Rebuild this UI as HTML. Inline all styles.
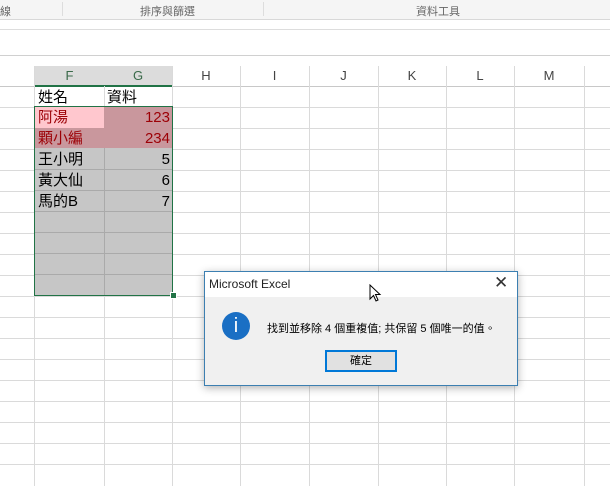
<!DOCTYPE html><html><head><style>
body{margin:0;width:610px;height:486px;background:#fff;position:relative;overflow:hidden;font-family:"Liberation Sans","Noto Sans CJK TC",sans-serif}
.a{position:absolute}
.vl{position:absolute;top:86px;bottom:0;width:1px;background:#dadada}
.hl{position:absolute;left:0;right:0;height:1px;background:#dadada}
.ch{position:absolute;top:66px;height:20px;font-size:13px;color:#444;text-align:center;line-height:20px}
.t{position:absolute;font-size:15px;color:#000;line-height:21px}
</style></head><body>
<div class="a" style="left:0;top:0;width:610px;height:19px;background:#f5f5f5;border-bottom:1px solid #d8d8d8"></div>
<div class="a" style="left:0;top:3px;font-size:11px;color:#666">線</div>
<div class="a" style="left:62px;top:2px;width:1px;height:14px;background:#ddd"></div>
<div class="a" style="left:140px;top:3px;font-size:11px;color:#666">排序與篩選</div>
<div class="a" style="left:263px;top:2px;width:1px;height:14px;background:#ddd"></div>
<div class="a" style="left:416px;top:3px;font-size:11px;color:#666">資料工具</div>
<div class="a" style="left:0;top:29px;width:610px;height:1px;background:#ddd"></div>
<div class="a" style="left:0;top:55px;width:610px;height:1px;background:#d0d0d0"></div>
<div class="a" style="left:0;top:66px;width:610px;height:20px;background:#fff;border-bottom:1px solid #c8c8c8"></div>
<div class="a" style="left:35px;top:66px;width:137px;height:19px;background:#dcdcdc;border-bottom:2px solid #217346"></div>
<div class="ch" style="left:-30px;width:40px">E</div>
<div class="ch" style="left:35px;width:69px;color:#3a6a4a">F</div>
<div class="ch" style="left:104px;width:68px;color:#3a6a4a">G</div>
<div class="ch" style="left:172px;width:68px">H</div>
<div class="ch" style="left:240px;width:69px">I</div>
<div class="ch" style="left:309px;width:69px">J</div>
<div class="ch" style="left:378px;width:68px">K</div>
<div class="ch" style="left:446px;width:68px">L</div>
<div class="ch" style="left:514px;width:70px">M</div>
<div class="vl" style="left:34px;top:66px"></div><div class="vl" style="left:104px"></div><div class="vl" style="left:172px;top:66px"></div><div class="vl" style="left:240px;top:66px"></div><div class="vl" style="left:309px;top:66px"></div><div class="vl" style="left:378px;top:66px"></div><div class="vl" style="left:446px;top:66px"></div><div class="vl" style="left:514px;top:66px"></div><div class="vl" style="left:584px;top:66px"></div>
<div class="hl" style="top:107px"></div><div class="hl" style="top:128px"></div><div class="hl" style="top:149px"></div><div class="hl" style="top:170px"></div><div class="hl" style="top:191px"></div><div class="hl" style="top:212px"></div><div class="hl" style="top:233px"></div><div class="hl" style="top:254px"></div><div class="hl" style="top:275px"></div><div class="hl" style="top:296px"></div><div class="hl" style="top:317px"></div><div class="hl" style="top:338px"></div><div class="hl" style="top:359px"></div><div class="hl" style="top:380px"></div><div class="hl" style="top:401px"></div><div class="hl" style="top:422px"></div><div class="hl" style="top:443px"></div><div class="hl" style="top:464px"></div>
<div class="a" style="left:35px;top:107px;width:137px;height:189px;background:#c6c6c6"></div>
<div class="a" style="left:35px;top:107px;width:69px;height:21px;background:#ffc7ce"></div>
<div class="a" style="left:104px;top:107px;width:68px;height:21px;background:#c9979d"></div>
<div class="a" style="left:35px;top:128px;width:137px;height:20px;background:#c9979d"></div>
<div class="a" style="left:104px;top:148px;width:1px;height:148px;background:#aaa"></div>
<div class="a" style="left:35px;top:169px;width:137px;height:1px;background:#aaa"></div><div class="a" style="left:35px;top:190px;width:137px;height:1px;background:#aaa"></div><div class="a" style="left:35px;top:211px;width:137px;height:1px;background:#aaa"></div><div class="a" style="left:35px;top:232px;width:137px;height:1px;background:#aaa"></div><div class="a" style="left:35px;top:253px;width:137px;height:1px;background:#aaa"></div><div class="a" style="left:35px;top:274px;width:137px;height:1px;background:#aaa"></div>
<div class="a" style="left:34px;top:106px;width:137px;height:188px;border:1px solid #217346"></div>
<div class="a" style="left:170px;top:292px;width:5px;height:5px;background:#217346;border:1px solid #fff"></div>
<div class="t" style="left:38px;top:87px">姓名</div><div class="t" style="left:107px;top:87px">資料</div>
<div class="t" style="left:38px;top:107px;color:#9c0006">阿湯</div><div class="t" style="left:104px;width:66px;text-align:right;top:107px;color:#9c0006">123</div>
<div class="t" style="left:38px;top:128px;color:#9c0006">顆小編</div><div class="t" style="left:104px;width:66px;text-align:right;top:128px;color:#9c0006">234</div>
<div class="t" style="left:38px;top:149px">王小明</div><div class="t" style="left:104px;width:66px;text-align:right;top:149px">5</div>
<div class="t" style="left:38px;top:170px">黃大仙</div><div class="t" style="left:104px;width:66px;text-align:right;top:170px">6</div>
<div class="t" style="left:38px;top:191px">馬的B</div><div class="t" style="left:104px;width:66px;text-align:right;top:191px">7</div>
<div class="a" style="left:204px;top:271px;width:312px;height:113px;background:#f0f0f0;border:1px solid #3c7fb1;box-shadow:0 2px 8px rgba(0,0,0,.3)"></div>
<div class="a" style="left:205px;top:272px;width:312px;height:25px;background:#fff"></div>
<div class="a" style="left:209px;top:277px;font-size:12px;color:#222">Microsoft Excel</div>
<div class="a" style="left:494px;top:273px;font-size:17px;color:#333">✕</div>
<div class="a" style="left:222px;top:312px;width:28px;height:28px;border-radius:50%;background:#1a6fc4;color:#fff;font-size:20px;text-align:center;line-height:28px">i</div>
<div class="a" style="left:267px;top:320px;font-size:11px;color:#000">找到並移除 4 個重複值; 共保留 5 個唯一的值。</div>
<div class="a" style="left:325px;top:350px;width:70px;height:20px;background:#e1e1e1;border:1px solid #0078d7;box-shadow:inset 0 0 0 1px #0078d7;font-size:11px;text-align:center;line-height:20px">確定</div>
<svg class="a" style="left:369px;top:284px" width="14" height="20"><path d="M1 1 L1 15 L4.5 11.5 L7 17 L9 16 L6.5 10.5 L11 10.5 Z" fill="#fff" stroke="#000"/></svg>
</body></html>
